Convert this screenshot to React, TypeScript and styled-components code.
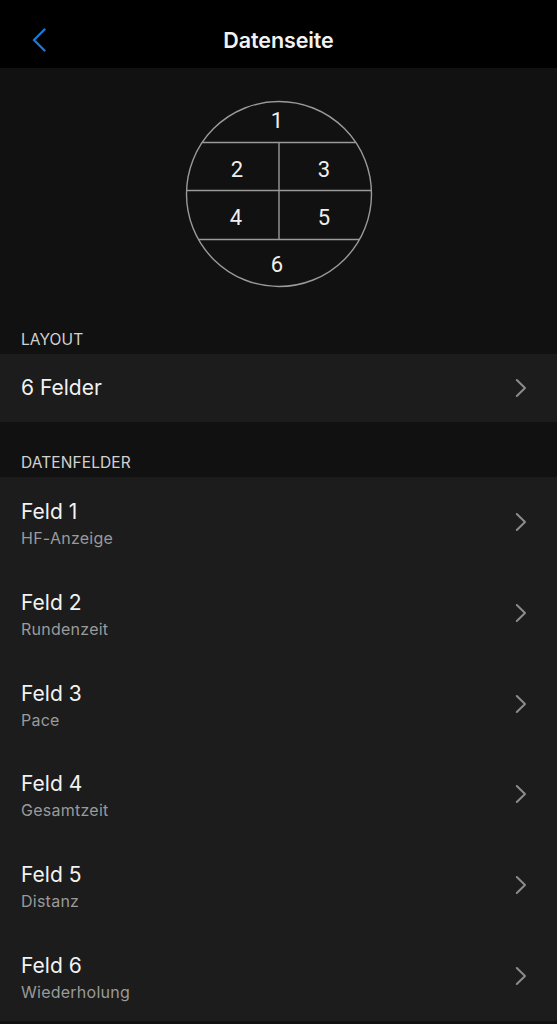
import React from "react";
import styled, { createGlobalStyle } from "styled-components";

const GlobalStyle = createGlobalStyle`
  html, body {
    margin: 0;
    padding: 0;
    background: #111111;
  }
  body {
    font-family: Inter, "Noto Sans", sans-serif;
    color: #f2f2f2;
    -webkit-font-smoothing: antialiased;
  }
`;

const Page = styled.div`
  width: 557px;
  min-height: 1024px;
  background: #111111;
  display: flex;
  flex-direction: column;
`;

const NavBar = styled.header`
  height: 68px;
  box-sizing: border-box;
  padding-top: 12px;
  background: #000000;
  display: grid;
  grid-template-columns: 80px 1fr 80px;
  align-items: center;
`;

const BackButton = styled.button`
  background: none;
  border: none;
  padding: 0 0 0 32px;
  height: 56px;
  display: flex;
  align-items: center;
  cursor: pointer;
`;

const NavTitle = styled.h1`
  margin: 0;
  text-align: center;
  font-size: 21.5px;
  font-weight: 600;
  letter-spacing: -0.1px;
  color: #f2f2f2;
`;

const Preview = styled.div`
  padding: 32px 0 40px;
  display: flex;
  justify-content: center;
`;

const SectionHeader = styled.div<{ $top?: number }>`
  padding: ${(p) => p.$top ?? 2}px 21px 4px;
  font-size: 15.5px;
  line-height: 20px;
  letter-spacing: 0.1px;
  color: #d2d2d2;
  text-transform: uppercase;
`;

const List = styled.div`
  background: #1c1c1c;
  display: flex;
  flex-direction: column;
`;

const Row = styled.div<{ $height: number }>`
  height: ${(p) => p.$height}px;
  box-sizing: border-box;
  padding: 0 30px 0 21px;
  display: flex;
  align-items: center;
  justify-content: space-between;
`;

const RowText = styled.div`
  display: flex;
  flex-direction: column;
  padding-top: 4px;
`;

const RowTitle = styled.div`
  font-size: 21px;
  line-height: 28px;
  color: #f2f2f2;
`;

const RowSubtitle = styled.div`
  font-size: 16px;
  line-height: 24px;
  letter-spacing: 0.25px;
  color: #9a9a9a;
`;

const BackIcon = () => (
  <svg width="14" height="24" viewBox="0 0 14 24">
    <path
      d="M12.5 1.5 L2 12 L12.5 22.5"
      fill="none"
      stroke="#1a78d6"
      strokeWidth="2.4"
      strokeLinecap="round"
      strokeLinejoin="round"
    />
  </svg>
);

const Chevron = () => (
  <svg width="12" height="20" viewBox="0 0 12 20">
    <path
      d="M1.8 2 L10 10 L1.8 18"
      fill="none"
      stroke="#8c8c8c"
      strokeWidth="2"
      strokeLinecap="round"
      strokeLinejoin="round"
    />
  </svg>
);

const digits: [string, number, number][] = [
  ["1", 92, 28],
  ["2", 52, 77],
  ["3", 139, 77],
  ["4", 51, 125],
  ["5", 139, 125],
  ["6", 92, 172],
];

const WatchFace = () => (
  <svg width="188" height="188" viewBox="0 0 188 188">
    <g fill="none" stroke="#9a9a9a" strokeWidth="1.4">
      <circle cx="94" cy="94" r="92.5" />
      <line x1="17.2" y1="42.5" x2="170.8" y2="42.5" />
      <line x1="1.6" y1="90.5" x2="186.4" y2="90.5" />
      <line x1="13.5" y1="139.5" x2="174.5" y2="139.5" />
      <line x1="94" y1="42.5" x2="94" y2="139.5" />
    </g>
    {digits.map(([d, x, y]) => (
      <text
        key={d}
        x={x}
        y={y}
        textAnchor="middle"
        fontFamily="Roboto, sans-serif"
        fontSize="22"
        fill="#efefef"
      >
        {d}
      </text>
    ))}
  </svg>
);

const fields = [
  { title: "Feld 1", value: "HF-Anzeige" },
  { title: "Feld 2", value: "Rundenzeit" },
  { title: "Feld 3", value: "Pace" },
  { title: "Feld 4", value: "Gesamtzeit" },
  { title: "Feld 5", value: "Distanz" },
  { title: "Feld 6", value: "Wiederholung" },
];

const App = () => (
  <>
    <GlobalStyle />
    <Page>
      <NavBar>
        <BackButton aria-label="Zurück">
          <BackIcon />
        </BackButton>
        <NavTitle>Datenseite</NavTitle>
        <div />
      </NavBar>
      <Preview>
        <WatchFace />
      </Preview>
      <SectionHeader>Layout</SectionHeader>
      <List>
        <Row $height={67.5}>
          <RowTitle>6 Felder</RowTitle>
          <Chevron />
        </Row>
      </List>
      <SectionHeader $top={31.5}>Datenfelder</SectionHeader>
      <List>
        {fields.map((f) => (
          <Row key={f.title} $height={90.67}>
            <RowText>
              <RowTitle>{f.title}</RowTitle>
              <RowSubtitle>{f.value}</RowSubtitle>
            </RowText>
            <Chevron />
          </Row>
        ))}
      </List>
    </Page>
  </>
);

export default App;
